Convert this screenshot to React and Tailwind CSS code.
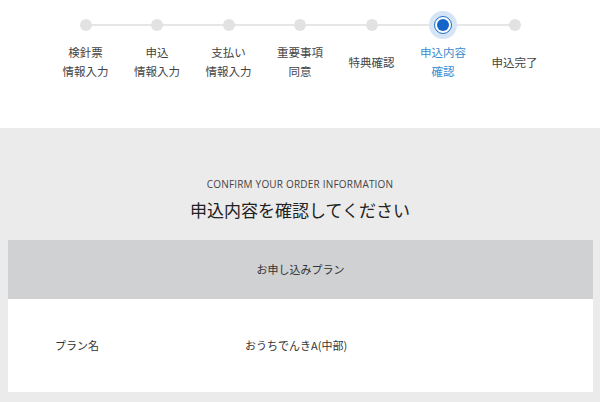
import React from "react";

const steps = [
  ["検針票", "情報入力"],
  ["申込", "情報入力"],
  ["支払い", "情報入力"],
  ["重要事項", "同意"],
  ["特典確認"],
  ["申込内容", "確認"],
  ["申込完了"],
];
const ACTIVE = 5;

export default function App() {
  return (
    <div
      className="w-[600px] h-[402px] overflow-hidden bg-white text-[#333]"
      style={{ fontFamily: '"Noto Sans CJK JP", "Noto Sans", sans-serif' }}
    >
      <div className="h-[128px] bg-white">
        <div className="relative flex justify-center pt-[11px]">
          <div className="absolute left-[85px] right-[86px] top-[24px] h-[2px] bg-[#e6e6e6]" />
          {steps.map((s, i) => (
            <div key={i} className="relative w-[71.5px] flex flex-col items-center">
              <div className="h-[28px] w-[28px] flex items-center justify-center">
                {i === ACTIVE ? (
                  <div className="h-[28px] w-[28px] rounded-full bg-[#d5e5f6] flex items-center justify-center">
                    <div className="h-[18px] w-[18px] rounded-full bg-white border-[1.5px] border-[#1d6fc4] flex items-center justify-center">
                      <div className="h-[12px] w-[12px] rounded-full bg-[#1565c8]" />
                    </div>
                  </div>
                ) : (
                  <div className="h-[12px] w-[12px] rounded-full bg-[#e2e2e2]" />
                )}
              </div>
              <div
                className={`mt-[4px] h-[38px] flex flex-col items-center justify-center text-[11.5px] leading-[19px] whitespace-nowrap ${
                  i === ACTIVE ? "text-[#3d8bd0]" : "text-[#444]"
                }`}
              >
                {s.map((l, j) => (
                  <span key={j}>{l}</span>
                ))}
              </div>
            </div>
          ))}
        </div>
      </div>
      <div className="h-[274px] bg-[#ebebeb] pt-[49px]">
        <div
          className="text-center text-[10px] leading-[14px] tracking-[0.2px] text-[#444]"
          style={{ fontFamily: '"Open Sans", "Noto Sans", sans-serif' }}
        >
          CONFIRM YOUR ORDER INFORMATION
        </div>
        <div className="mt-[7px] text-center text-[17px] leading-[24px] text-[#222]">
          申込内容を確認してください
        </div>
        <div className="mt-[18px] ml-[8px] mr-[7px]">
          <div className="h-[59px] bg-[#d0d1d3] flex items-center justify-center text-[11px] text-[#333]">
            お申し込みプラン
          </div>
          <div className="h-[93px] bg-white flex items-center text-[11px] text-[#333]">
            <div className="w-[237px] pl-[47px]">プラン名</div>
            <div>おうちでんきA(中部)</div>
          </div>
        </div>
      </div>
    </div>
  );
}
